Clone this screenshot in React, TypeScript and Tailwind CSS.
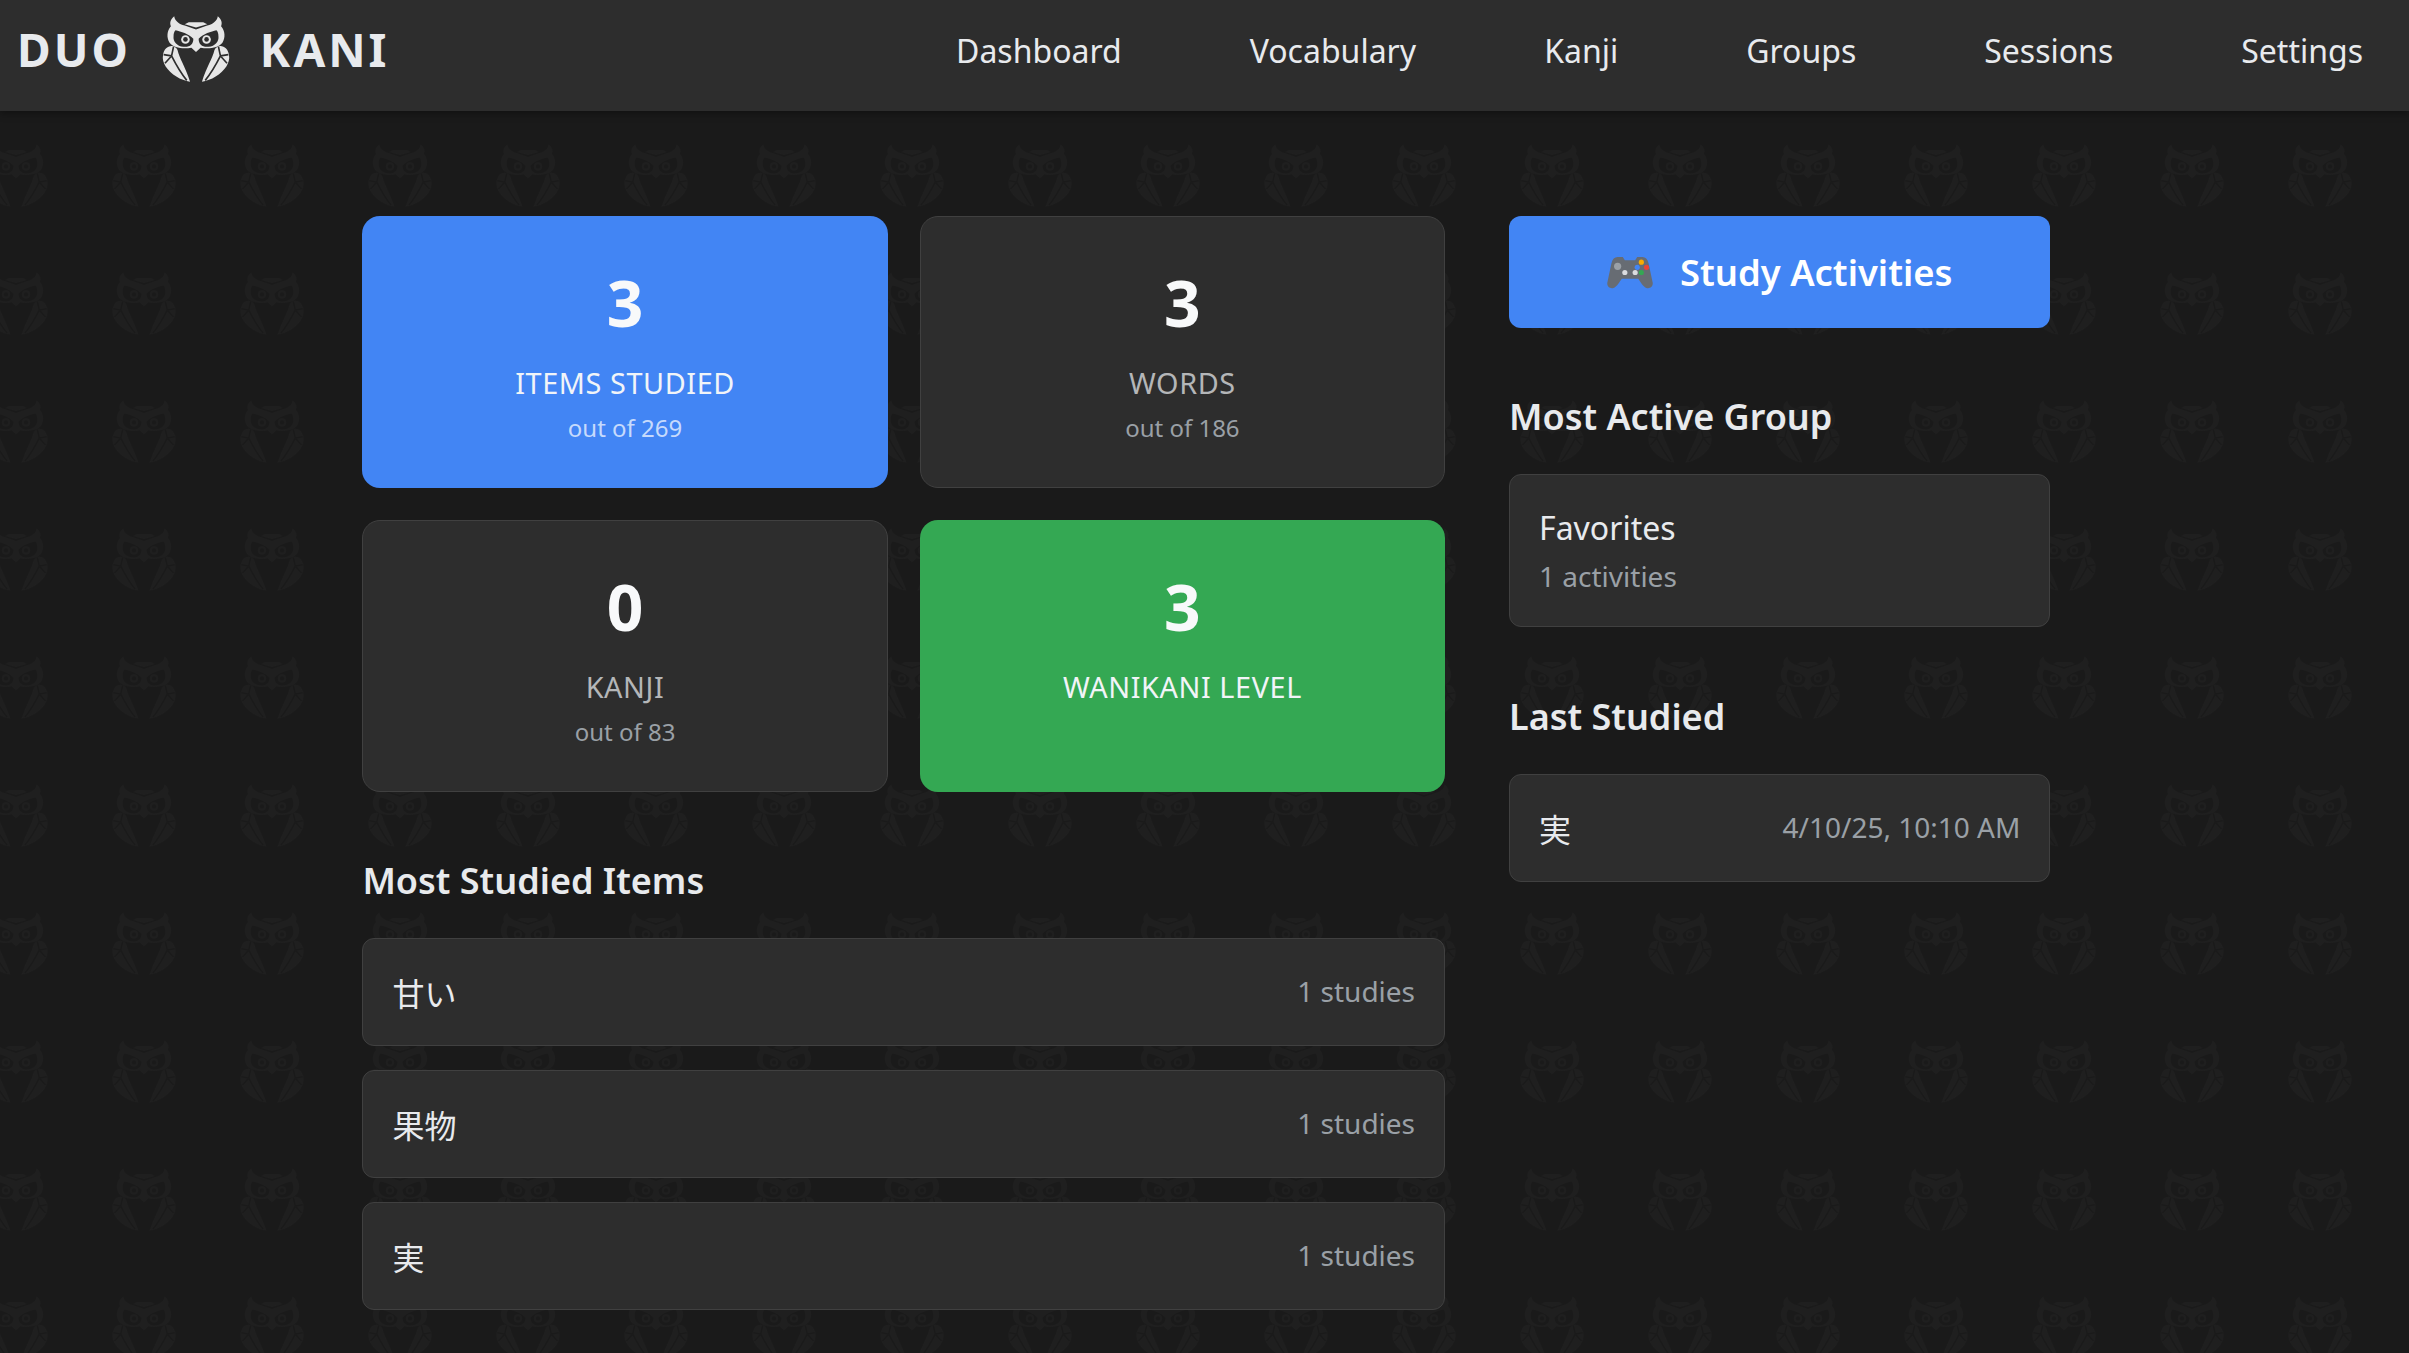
const Owl = ({ fg, bg }: { fg: string; bg: string }) => {
  const wing =
    "M38 150 C40 132 52 121 66 122 C74 124 79 128 82 134 C88 160 106 186 120 230 C92 226 62 208 46 184 C39 172 36 162 38 150 Z";
  const half = (
    <g>
      <path d={wing} fill={fg} />
      <path d="M70 124 L64 152 L44 174 M64 152 C76 176 92 204 110 226 M40 148 L64 152" stroke={bg} strokeWidth="5" fill="none" />
    </g>
  );
  return (
    <g>
      <path
        fill={fg}
        d="M72 32 C60 42 58 52 62 62 C50 76 48 96 58 112 C70 128 100 132 124 127 L138 140 L152 127 C176 132 206 128 218 112 C228 96 226 76 214 62 C218 52 216 42 204 32 C202 46 190 56 172 60 L138 72 L104 60 C86 56 74 46 72 32 Z"
      />
      <path fill={fg} d="M104 56 L138 66 L172 56 L160 50 L116 50 Z" />
      <path fill={bg} d="M76 74 C92 78 116 84 130 100 C130 118 118 126 100 124 C80 122 68 108 70 92 C70 84 72 78 76 74 Z" />
      <path fill={bg} d="M200 74 C184 78 160 84 146 100 C146 118 158 126 176 124 C196 122 208 108 206 92 C206 84 204 78 200 74 Z" />
      <circle cx="106" cy="102" r="13" fill={fg} />
      <circle cx="106" cy="102" r="7" fill={bg} />
      <circle cx="170" cy="102" r="13" fill={fg} />
      <circle cx="170" cy="102" r="7" fill={bg} />
      {half}
      <g transform="translate(276 0) scale(-1 1)">{half}</g>
    </g>
  );
};

const Card = ({
  value,
  label,
  sub,
  tone,
}: {
  value: string;
  label: string;
  sub?: string;
  tone: "blue" | "green" | "dark";
}) => {
  const box =
    tone === "blue"
      ? "bg-[#4285f4] pt-[39px]"
      : tone === "green"
        ? "bg-[#34a853] pt-[39px]"
        : "bg-[#2d2d2d] border border-[#404040] pt-[38px]";
  const labelColor = tone === "dark" ? "text-[#b4b6b8]" : "text-[#f1f4f8]";
  const subColor = tone === "dark" ? "text-[#9aa0a6]" : "text-[#c6dafc]";
  return (
    <div className={`${box} h-[272px] rounded-[18px] flex flex-col items-center`}>
      <div className="text-[64px] leading-[96px] font-bold text-[#f8f9fa]">{value}</div>
      <div className={`${labelColor} text-[28.8px] leading-[42px] mt-[11px] tracking-[0.6px]`}>{label}</div>
      {sub && <div className={`${subColor} text-[24px] leading-[36px] mt-[6px]`}>{sub}</div>}
    </div>
  );
};

const Row = ({ name, value }: { name: string; value: string }) => (
  <div className="h-[108px] flex items-center justify-between pl-[29px] pr-[29px] bg-[#2d2d2d] border border-[#404040] rounded-[12px]">
    <span className="text-[32px] text-[#e8eaed] mt-[4px]">{name}</span>
    <span className="text-[28px] text-[#9aa0a6] -mt-[3px]">{value}</span>
  </div>
);

const Heading = ({ children, extra }: { children: string; extra?: string }) => (
  <h2 className={`text-[36px] leading-[54px] font-semibold text-[#e8eaed] mb-[30px] ${extra ?? "mt-[62px]"}`}>{children}</h2>
);

export default function App() {
  const nav = ["Dashboard", "Vocabulary", "Kanji", "Groups", "Sessions", "Settings"];
  return (
    <div
      className="relative h-[1353px] overflow-hidden bg-[#1a1a1a]"
      style={{ fontFamily: '"Noto Sans", "Noto Sans CJK JP", sans-serif' }}
    >
      <svg className="absolute inset-0 w-full h-full" aria-hidden="true">
        <defs>
          <pattern id="owls" patternUnits="userSpaceOnUse" x="112" y="15" width="128" height="128">
            <svg x="0" y="0" width="64" height="65" viewBox="36 28 204 206">
              <Owl fg="#1f1f1f" bg="#1a1a1a" />
            </svg>
          </pattern>
        </defs>
        <rect width="100%" height="100%" fill="url(#owls)" />
      </svg>

      <header className="relative h-[111px] bg-[#2d2d2d] flex items-center justify-between pl-[17px] pr-[46px] shadow-[0_2px_8px_rgba(0,0,0,0.4)]">
        <div className="flex items-center text-[#e8eaed] text-[46px] font-bold tracking-[3px] -mt-[13px]">
          <span>DUO</span>
          <svg className="ml-[31px] mr-[30px]" width="68" height="68" viewBox="36 28 204 206">
            <Owl fg="#e6e6e6" bg="#2d2d2d" />
          </svg>
          <span>KANI</span>
        </div>
        <nav className="flex gap-[128px] text-[32px] text-[#e8eaed] -mt-[9px]">
          {nav.map((n) => (
            <span key={n}>{n}</span>
          ))}
        </nav>
      </header>

      <main className="relative ml-[362.4px] w-[1688px] mt-[105px] grid grid-cols-[2fr_1fr] gap-16">
        <section>
          <div className="grid grid-cols-2 gap-8">
            <Card value="3" label="ITEMS STUDIED" sub="out of 269" tone="blue" />
            <Card value="3" label="WORDS" sub="out of 186" tone="dark" />
            <Card value="0" label="KANJI" sub="out of 83" tone="dark" />
            <Card value="3" label="WANIKANI LEVEL" tone="green" />
          </div>
          <Heading>Most Studied Items</Heading>
          <div className="flex flex-col gap-6">
            <Row name="甘い" value="1 studies" />
            <Row name="果物" value="1 studies" />
            <Row name="実" value="1 studies" />
          </div>
        </section>

        <aside>
          <button className="w-full h-[112px] rounded-[12px] bg-[#4285f4] text-white text-[36.4px] font-semibold flex items-center justify-center gap-[27px]">
            <svg width="46" height="33" viewBox="0 0 44 32">
              <path
                fill="#676c73"
                d="M10 1 H15 L17 4 H27 L29 1 H34 C37 1 39 3 40 7 L44 26 C44.500 30 41 32 38 31 C35 30 32 25 30 22 H14 C12 25 9 30 6 31 C3 32 -0.500 30 0 26 L4 7 C5 3 7 1 10 1 Z"
              />
              <circle cx="10" cy="10" r="3.500" fill="#9aa0a6" />
              <circle cx="17" cy="16" r="2.500" fill="#dadce0" />
              <circle cx="27" cy="16" r="2.500" fill="#dadce0" />
              <circle cx="33" cy="6" r="2.500" fill="#f9ab00" />
              <circle cx="38" cy="11" r="2.500" fill="#ea4335" />
              <circle cx="29" cy="11" r="2.500" fill="#4285f4" />
              <circle cx="33" cy="16" r="2.500" fill="#34a853" />
            </svg>
            <span>Study Activities</span>
          </button>

          <Heading>Most Active Group</Heading>
          <div className="h-[153px] bg-[#2d2d2d] border border-[#404040] rounded-[12px] pl-[29px] pt-[29px]">
            <div className="text-[32px] leading-[48px] text-[#e8eaed]">Favorites</div>
            <div className="text-[28px] leading-[42px] mt-[3px] text-[#9aa0a6]">1 activities</div>
          </div>

          <Heading extra="mt-[63px]">Last Studied</Heading>
          <Row name="実" value="4/10/25, 10:10 AM" />
        </aside>
      </main>
    </div>
  );
}
